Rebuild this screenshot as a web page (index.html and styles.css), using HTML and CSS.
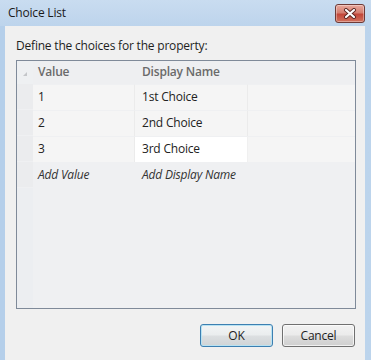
FILE: index.html
```html
<!DOCTYPE html>
<html lang="en">
<head>
    <meta charset="UTF-8">
    <title>Choice List</title>
    <link rel="stylesheet" href="styles.css">
</head>
<body>
    <div class="window">
        <div class="titlebar">
            <span class="title">Choice List</span>
            <button class="close-btn" aria-label="Close">
                <svg width="14" height="11" viewBox="0 0 14 11">
                    <path d="M3 2 L11 9 M11 2 L3 9" stroke="#5a2520" stroke-width="4" stroke-linecap="round"/>
                    <path d="M3 2 L11 9 M11 2 L3 9" stroke="#fff" stroke-width="2.2" stroke-linecap="round"/>
                </svg>
            </button>
        </div>
        <div class="client">
            <p class="prompt">Define the choices for the property:</p>
            <div class="grid">
                <div class="corner"><span class="corner-mark"></span></div>
                <div class="head">Value</div>
                <div class="head">Display Name</div>
                <div class="head filler"></div>

                <div class="rowhead"></div>
                <div class="cell">1</div>
                <div class="cell">1st Choice</div>
                <div class="cell filler"></div>

                <div class="rowhead"></div>
                <div class="cell">2</div>
                <div class="cell">2nd Choice</div>
                <div class="cell filler"></div>

                <div class="rowhead"></div>
                <div class="cell">3</div>
                <div class="cell editing">3rd Choice</div>
                <div class="cell filler"></div>

                <div class="rowhead"></div>
                <div class="cell add">Add Value</div>
                <div class="cell add">Add Display Name</div>
                <div class="cell add filler"></div>

                <div class="rowhead rest"></div>
                <div class="rest-fill"></div>
            </div>
            <div class="buttons">
                <button class="btn default">OK</button>
                <button class="btn">Cancel</button>
            </div>
        </div>
    </div>
</body>
</html>
```

FILE: styles.css
```css
body {
    margin: 0;
    font-family: "Open Sans", "Noto Sans", sans-serif;
    font-size: 12px;
    color: #1e1e1e;
}

.window {
    width: 371px;
    height: 360px;
    background: linear-gradient(to right, #b5cfea 0, #bcd4ec 100%);
    padding: 0 6px 0 5px;
    box-sizing: border-box;
    display: flex;
    flex-direction: column;
}

.titlebar {
    height: 26px;
    display: flex;
    align-items: center;
    justify-content: space-between;
    margin: 0 -6px 0 -5px;
    padding: 0 6px 2px 8px;
    box-sizing: border-box;
    background: linear-gradient(to bottom, #c9dcf0 0, #bdd4ec 100%);
}

.title {
    font-size: 12px;
    color: #1a1a1a;
    letter-spacing: -0.2px;
}

.close-btn {
    width: 30px;
    height: 19px;
    margin-top: 3px;
    padding: 0;
    border: 1px solid #6e3a36;
    border-radius: 3px;
    background: linear-gradient(to bottom, #e9a99d 0, #d47f71 45%, #c2473a 55%, #d1725e 100%);
    display: flex;
    align-items: center;
    justify-content: center;
    box-shadow: inset 0 0 0 1px rgba(255, 255, 255, 0.35);
}

.client {
    flex: 1;
    background: #f0f0f0;
    padding: 12px 9px 0 11px;
}

.prompt {
    margin: 0 0 7px 0;
    font-size: 12px;
    line-height: 15px;
    letter-spacing: -0.2px;
    color: #1e1e1e;
}

.grid {
    height: 247px;
    border: 1px solid #7f8a99;
    background: #eff0f2;
    display: grid;
    grid-template-columns: 16px 102px 113px 1fr;
    grid-template-rows: 23px 26px 26px 26px 26px 1fr;
}

.corner {
    position: relative;
    background: #eef0f2;
}

.corner-mark {
    position: absolute;
    left: 6px;
    top: 11px;
    width: 0;
    height: 0;
    border-left: 4px solid transparent;
    border-bottom: 4px solid #c4c6c9;
}

.head {
    background: #eeeff1;
    font-weight: 600;
    color: #6a6a6a;
    padding-left: 5px;
    line-height: 21px;
    letter-spacing: -0.2px;
}

.head + .head {
    padding-left: 7px;
}

.rowhead {
    background: #ebecee;
    border-bottom: 1px solid #eff0f2;
}

.rowhead.rest {
    background: #eceef1;
    border-bottom: none;
}

.rest-fill {
    grid-column: 2 / 5;
}

.cell {
    background: #f5f5f5;
    border-right: 1px solid #ebebeb;
    border-top: 1px solid #eff0f2;
    padding-left: 5px;
    line-height: 23px;
    color: #222;
    letter-spacing: -0.2px;
}

.cell + .cell {
    padding-left: 7px;
}

.cell.filler {
    border-right: none;
}

.cell.editing {
    background: #fff;
    border-right: 1px solid #f0f0f0;
}

.cell.add {
    background: transparent;
    border-right: none;
    font-style: italic;
    color: #333;
}

.buttons {
    display: flex;
    justify-content: flex-end;
    gap: 9px;
    margin-top: 15px;
    padding-right: 1px;
}

.btn {
    width: 73px;
    height: 23px;
    font-family: "Open Sans", "Noto Sans", sans-serif;
    font-size: 12px;
    color: #1e1e1e;
    border: 1px solid #707070;
    border-radius: 3px;
    background: linear-gradient(to bottom, #f2f2f2 0, #ebebeb 48%, #dddddd 52%, #cfcfcf 100%);
    box-shadow: inset 0 0 0 1px rgba(255, 255, 255, 0.7);
    letter-spacing: -0.2px;
    padding: 0;
}

.btn.default {
    border-color: #3c7fb1;
    box-shadow: inset 0 0 0 1px #b8e2f2;
    background: linear-gradient(to bottom, #f2f4f5 0, #eaedee 48%, #dcdfe1 52%, #d0d4d6 100%);
}
```
